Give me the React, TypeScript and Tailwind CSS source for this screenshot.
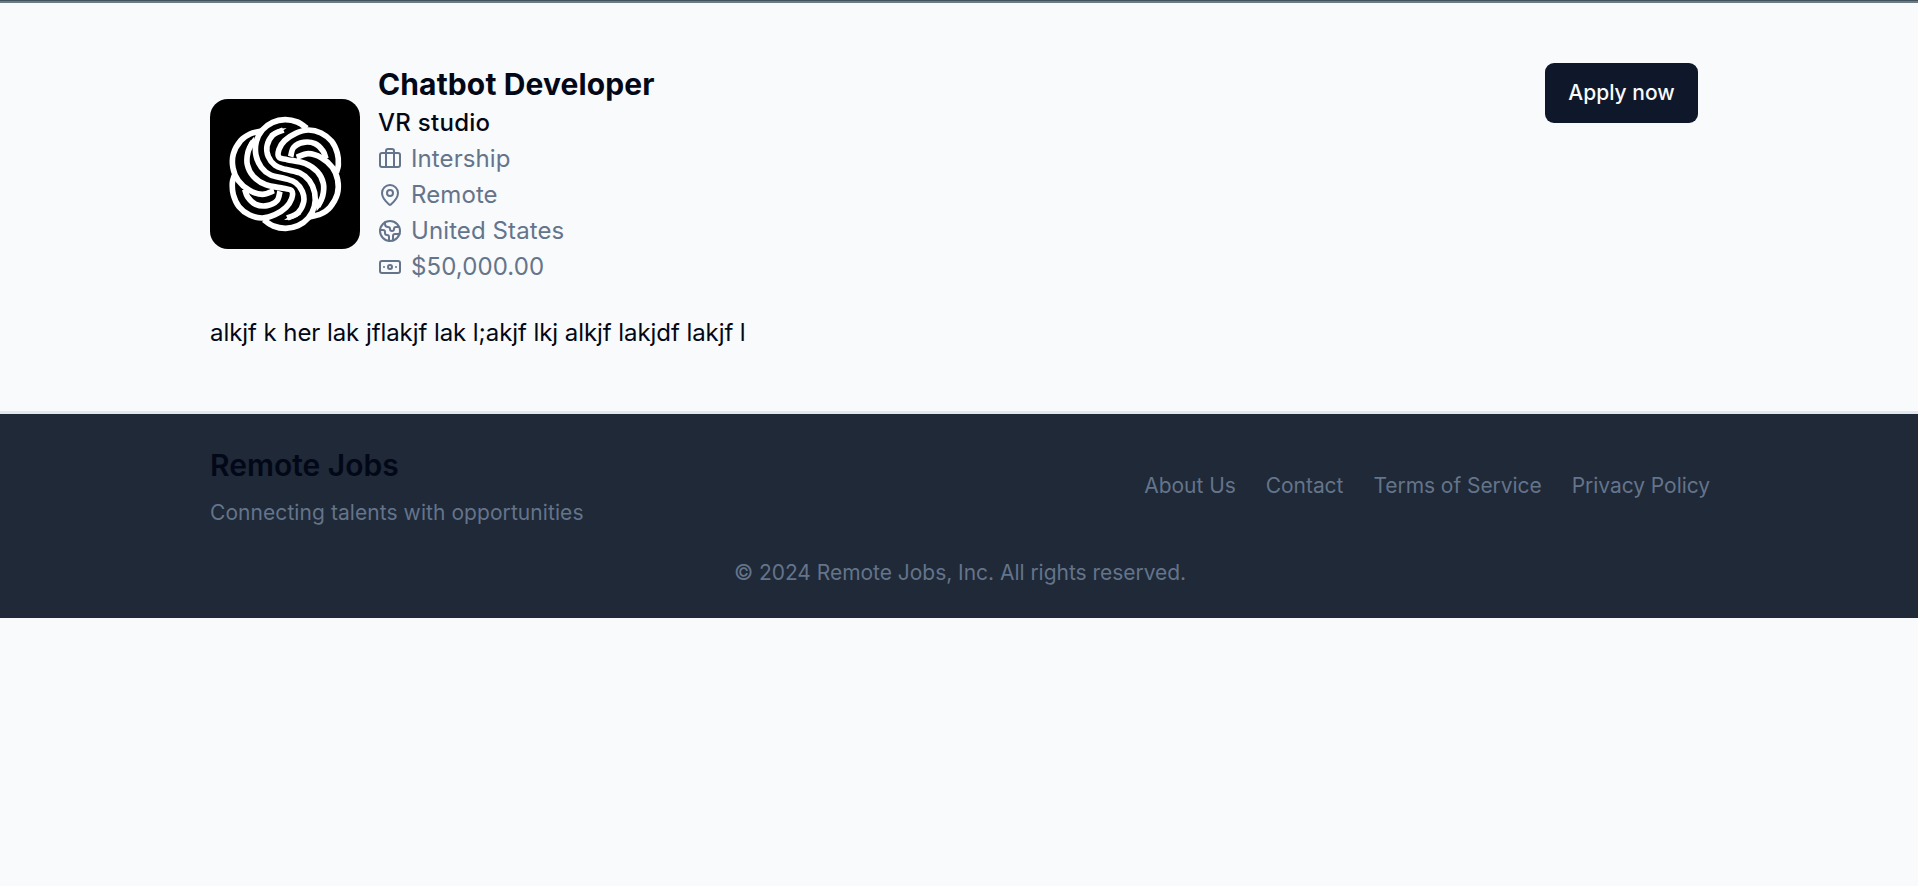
import { Briefcase, MapPin, Globe2, Banknote } from "lucide-react";

const details = [
  { icon: Briefcase, text: "Intership" },
  { icon: MapPin, text: "Remote" },
  { icon: Globe2, text: "United States" },
  { icon: Banknote, text: "$50,000.00" },
];

const links = ["About Us", "Contact", "Terms of Service", "Privacy Policy"];

type Point = [number, number];

// Smooth (Catmull-Rom) curve through the given points.
function curve(p: Point[]) {
  let d = `M${p[0][0]} ${p[0][1]}`;
  for (let i = 0; i < p.length - 1; i++) {
    const a = p[Math.max(i - 1, 0)];
    const b = p[i];
    const c = p[i + 1];
    const e = p[Math.min(i + 2, p.length - 1)];
    d += `C${b[0] + (c[0] - a[0]) / 6} ${b[1] + (c[1] - a[1]) / 6} ${c[0] - (e[0] - b[0]) / 6} ${c[1] - (e[1] - b[1]) / 6} ${c[0]} ${c[1]}`;
  }
  return d;
}

// One half of the knot; the other half is the same strokes turned by 180 degrees.
const strands: Point[][] = [
  [[321, 115], [292, 96], [255, 89], [218, 97], [187, 120], [169, 155], [168, 196], [184, 232], [212, 255], [256, 266], [287, 278], [307, 304], [311, 336], [294, 368], [262, 384]],
  [[409, 248], [415, 225], [412, 190], [395, 154], [363, 129], [325, 120], [287, 130], [254, 152], [237, 178], [237, 202], [262, 209], [315, 220], [352, 245], [370, 280], [368, 318], [353, 350]],
  [[272, 200], [281, 172], [311, 157], [345, 161], [369, 183], [378, 206]],
  [[290, 202], [325, 191], [364, 203], [397, 232], [413, 270], [412, 312], [390, 352], [362, 372], [328, 381]],
];

// Pointed ends of the two open strands.
const tips = "M296 360L252 390Q282 390 304 372ZM347 342L350 364Q364 350 372 330Z";

function Logo() {
  const half = (
    <>
      {strands.map((s, i) => (
        <path key={i} d={curve(s)} />
      ))}
      <path d={tips} fill="#fff" stroke="none" />
    </>
  );
  return (
    <svg viewBox="30 27 450 450" className="size-[150px] shrink-0 rounded-[18px] bg-black">
      <g fill="none" stroke="#fff" strokeWidth="17" strokeLinejoin="round">
        {half}
        <g transform="rotate(180 256 252)">{half}</g>
      </g>
    </svg>
  );
}

export default function App() {
  return (
    <div className="min-h-screen bg-[#f8fafc] text-[#020817] font-['Inter','Liberation_Sans',sans-serif]">
      <div className="h-[3px] border-b-2 border-[#6d7b83] bg-[#40525d]" />
      <main className="mx-auto w-[1500px] translate-x-px pt-[60px] pb-[60px]">
        <section className="flex items-start justify-between">
          <div className="flex items-center gap-[18px]">
            <Logo />
            <div>
              <h1 className="text-[30px] leading-[42px] font-bold tracking-[0.12px]">Chatbot Developer</h1>
              <p className="text-2xl leading-9 font-medium tracking-[0.28px]">VR studio</p>
              {details.map(({ icon: Icon, text }) => (
                <p key={text} className="flex items-center gap-[9px] text-2xl leading-9 tracking-[0.1px] text-[#64748b]">
                  <Icon size={24} />
                  {text}
                </p>
              ))}
            </div>
          </div>
          <button className="mr-3 h-[60px] w-[153px] rounded-[9px] bg-[#0f172a] text-[21px] font-medium text-[#f8fafc]">
            Apply now
          </button>
        </section>
        <p className="mt-[30px] text-2xl leading-9 tracking-[-0.07px]">alkjf k her lak jflakjf lak l;akjf lkj alkjf lakjdf lakjf l</p>
      </main>
      <footer className="border-t-[3px] border-[#e2e8f0] bg-[#1f2937]">
        <div className="mx-auto w-[1500px] translate-x-px py-[30px] text-[21px] leading-[30px] text-[#64748b]">
          <div className="flex items-center justify-between">
            <div>
              <h2 className="text-[30px] leading-[42px] font-semibold text-[#020817]">Remote Jobs</h2>
              <p className="mt-3 tracking-[0.07px]">Connecting talents with opportunities</p>
            </div>
            <nav className="flex gap-[30px]">
              {links.map((link) => (
                <a key={link} href="#" className="tracking-[-0.05px]">{link}</a>
              ))}
            </nav>
          </div>
          <p className="mt-[30px] text-center tracking-[-0.03px]">© 2024 Remote Jobs, Inc. All rights reserved.</p>
        </div>
      </footer>
    </div>
  );
}
